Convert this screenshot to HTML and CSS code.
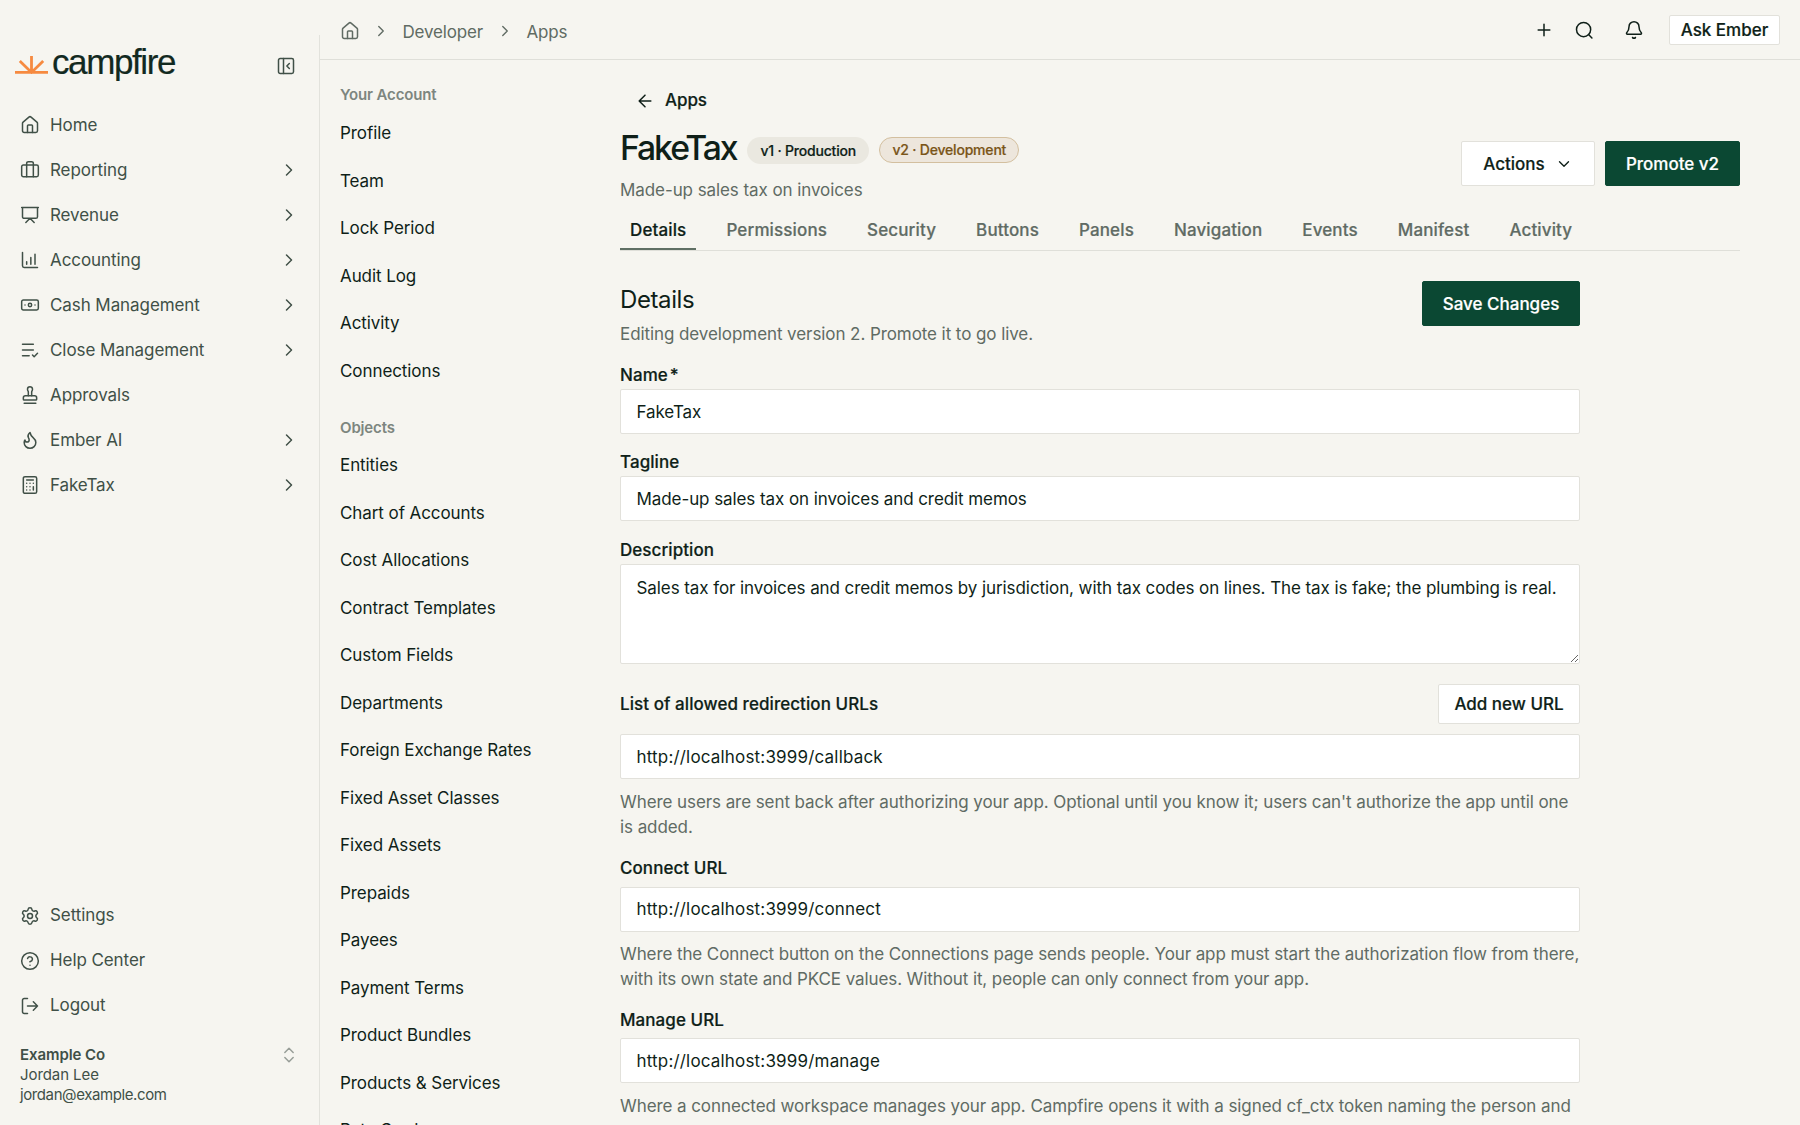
FILE: index.html
```html
<!DOCTYPE html>
<html lang="en">
<head>
    <meta charset="UTF-8">
    <meta name="viewport" content="width=device-width, initial-scale=1.0">
    <title>FakeTax - Campfire</title>
    <link rel="stylesheet" href="styles.css">
</head>
<body>
    <!-- shared icons -->
    <svg class="sprite" width="0" height="0">
        <symbol id="i-home" viewBox="0 0 24 24"><path d="M15 21v-8a1 1 0 0 0-1-1h-4a1 1 0 0 0-1 1v8"/><path d="M3 10a2 2 0 0 1 .709-1.528l7-6a2 2 0 0 1 2.582 0l7 6A2 2 0 0 1 21 10v9a2 2 0 0 1-2 2H5a2 2 0 0 1-2-2z"/></symbol>
        <symbol id="i-right" viewBox="0 0 24 24"><path d="m9 18 6-6-6-6"/></symbol>
    </svg>

    <div class="app">
        <aside class="sidebar">
            <div class="brand">
                <svg class="logo-mark" viewBox="0 0 33 18"><path d="M0 16.4h33M16.5 0v16M4.8 5l11.7 11.4L28.2 5"/></svg>
                <span class="logo-text">campfire</span>
                <svg class="icon" viewBox="0 0 24 24"><rect width="18" height="18" x="3" y="3" rx="2"/><path d="M9 3v18M16 15l-3-3 3-3"/></svg>
            </div>

            <nav class="menu">
                <a class="menu-item"><svg class="icon"><use href="#i-home"/></svg><span>Home</span></a>
                <a class="menu-item"><svg class="icon" viewBox="0 0 24 24"><path d="M16 20V4a2 2 0 0 0-2-2h-4a2 2 0 0 0-2 2v16"/><rect width="20" height="14" x="2" y="6" rx="2"/></svg><span>Reporting</span><svg class="icon"><use href="#i-right"/></svg></a>
                <a class="menu-item"><svg class="icon" viewBox="0 0 24 24"><path d="M2 3h20M21 3v11a2 2 0 0 1-2 2H5a2 2 0 0 1-2-2V3M7 21l5-5 5 5"/></svg><span>Revenue</span><svg class="icon"><use href="#i-right"/></svg></a>
                <a class="menu-item"><svg class="icon" viewBox="0 0 24 24"><path d="M13 17V9M18 17V5M3 3v16a2 2 0 0 0 2 2h16M8 17v-3"/></svg><span>Accounting</span><svg class="icon"><use href="#i-right"/></svg></a>
                <a class="menu-item"><svg class="icon" viewBox="0 0 24 24"><rect width="20" height="12" x="2" y="6" rx="2"/><circle cx="12" cy="12" r="2"/><path d="M6 12h.01M18 12h.01"/></svg><span>Cash Management</span><svg class="icon"><use href="#i-right"/></svg></a>
                <a class="menu-item"><svg class="icon" viewBox="0 0 24 24"><path d="M16 5H3M16 12H3M11 19H3M15 18l2 2 4-4"/></svg><span>Close Management</span><svg class="icon"><use href="#i-right"/></svg></a>
                <a class="menu-item"><svg class="icon" viewBox="0 0 24 24"><path d="M14 13V8.5C14 7 15 7 15 5a3 3 0 0 0-6 0c0 2 1 2 1 3.5V13"/><path d="M20 15.5a2.5 2.5 0 0 0-2.5-2.5h-11A2.5 2.5 0 0 0 4 15.5V17a1 1 0 0 0 1 1h14a1 1 0 0 0 1-1z"/><path d="M5 22h14"/></svg><span>Approvals</span></a>
                <a class="menu-item"><svg class="icon" viewBox="0 0 24 24"><path d="M8.5 14.5A2.5 2.5 0 0 0 11 12c0-1.38-.5-2-1-3-1.072-2.143-.224-4.054 2-6 .5 2.5 2 4.9 4 6.5 2 1.6 3 3.5 3 5.5a7 7 0 1 1-14 0c0-1.153.433-2.294 1-3a2.5 2.5 0 0 0 2.5 2.5z"/></svg><span>Ember AI</span><svg class="icon"><use href="#i-right"/></svg></a>
                <a class="menu-item"><svg class="icon" viewBox="0 0 24 24"><rect width="16" height="20" x="4" y="2" rx="2"/><path d="M8 6h8M16 14v4M16 10h.01M12 10h.01M8 10h.01M12 14h.01M8 14h.01M12 18h.01M8 18h.01"/></svg><span>FakeTax</span><svg class="icon"><use href="#i-right"/></svg></a>
            </nav>

            <nav class="menu menu-bottom">
                <a class="menu-item"><svg class="icon" viewBox="0 0 24 24"><path d="M9.671 4.136a2.34 2.34 0 0 1 4.659 0 2.34 2.34 0 0 0 3.319 1.915 2.34 2.34 0 0 1 2.33 4.033 2.34 2.34 0 0 0 0 3.831 2.34 2.34 0 0 1-2.33 4.033 2.34 2.34 0 0 0-3.319 1.915 2.34 2.34 0 0 1-4.659 0 2.34 2.34 0 0 0-3.32-1.915 2.34 2.34 0 0 1-2.33-4.033 2.34 2.34 0 0 0 0-3.831A2.34 2.34 0 0 1 6.35 6.051a2.34 2.34 0 0 0 3.319-1.915"/><circle cx="12" cy="12" r="3"/></svg><span>Settings</span></a>
                <a class="menu-item"><svg class="icon" viewBox="0 0 24 24"><circle cx="12" cy="12" r="10"/><path d="M9.09 9a3 3 0 0 1 5.83 1c0 2-3 3-3 3M12 17h.01"/></svg><span>Help Center</span></a>
                <a class="menu-item"><svg class="icon" viewBox="0 0 24 24"><path d="m16 17 5-5-5-5M21 12H9M9 21H5a2 2 0 0 1-2-2V5a2 2 0 0 1 2-2h4"/></svg><span>Logout</span></a>
            </nav>

            <div class="account">
                <div>
                    <strong>Example Co</strong>
                    <div>Jordan Lee</div>
                    <div class="email">jordan@example.com</div>
                </div>
                <svg class="icon" viewBox="0 0 24 24"><path d="m7 15 5 5 5-5M7 9l5-5 5 5"/></svg>
            </div>
        </aside>

        <div class="page">
            <header class="topbar">
                <div class="breadcrumbs">
                    <svg class="icon"><use href="#i-home"/></svg>
                    <svg class="icon small"><use href="#i-right"/></svg>
                    <span>Developer</span>
                    <svg class="icon small"><use href="#i-right"/></svg>
                    <span>Apps</span>
                </div>
                <div class="top-actions">
                    <svg class="icon" viewBox="0 0 24 24"><path d="M5 12h14M12 5v14"/></svg>
                    <svg class="icon search" viewBox="0 0 24 24"><circle cx="11.5" cy="11.5" r="8.5"/><path d="m21.5 21.5-4-4"/></svg>
                    <svg class="icon bell" viewBox="0 0 24 24"><path d="M10.268 21a2 2 0 0 0 3.464 0"/><path d="M3.262 15.326A1 1 0 0 0 4 17h16a1 1 0 0 0 .74-1.673C19.41 13.956 18 12.499 18 8A6 6 0 0 0 6 8c0 4.499-1.411 5.956-2.738 7.326"/></svg>
                    <button class="btn btn-ember">Ask Ember</button>
                </div>
            </header>

            <div class="columns">
                <nav class="subnav">
                    <h4>Your Account</h4>
                    <a>Profile</a>
                    <a>Team</a>
                    <a>Lock Period</a>
                    <a>Audit Log</a>
                    <a>Activity</a>
                    <a>Connections</a>
                    <h4 class="second">Objects</h4>
                    <a>Entities</a>
                    <a>Chart of Accounts</a>
                    <a>Cost Allocations</a>
                    <a>Contract Templates</a>
                    <a>Custom Fields</a>
                    <a>Departments</a>
                    <a>Foreign Exchange Rates</a>
                    <a>Fixed Asset Classes</a>
                    <a>Fixed Assets</a>
                    <a>Prepaids</a>
                    <a>Payees</a>
                    <a>Payment Terms</a>
                    <a>Product Bundles</a>
                    <a>Products &amp; Services</a>
                    <a>Rate Cards</a>
                </nav>

                <main class="content">
                    <a class="back"><svg class="icon" viewBox="0 0 24 24"><path d="m12 19-7-7 7-7M19 12H5"/></svg>Apps</a>

                    <div class="app-header">
                        <div>
                            <div class="title-row">
                                <h1>FakeTax</h1>
                                <span class="badge">v1 · Production</span>
                                <span class="badge badge-dev">v2 · Development</span>
                            </div>
                            <p class="subtitle">Made-up sales tax on invoices</p>
                        </div>
                        <div class="header-buttons">
                            <button class="btn">Actions <svg class="icon small" viewBox="0 0 24 24"><path d="m6 9 6 6 6-6"/></svg></button>
                            <button class="btn btn-primary">Promote v2</button>
                        </div>
                    </div>

                    <div class="tabs">
                        <a class="tab active">Details</a>
                        <a class="tab">Permissions</a>
                        <a class="tab">Security</a>
                        <a class="tab">Buttons</a>
                        <a class="tab">Panels</a>
                        <a class="tab">Navigation</a>
                        <a class="tab">Events</a>
                        <a class="tab">Manifest</a>
                        <a class="tab">Activity</a>
                    </div>

                    <form class="form">
                        <div class="form-head">
                            <div>
                                <h2>Details</h2>
                                <p>Editing development version 2. Promote it to go live.</p>
                            </div>
                            <button type="button" class="btn btn-primary btn-save">Save Changes</button>
                        </div>

                        <div class="field">
                            <label>Name<span class="star">*</span></label>
                            <input type="text" value="FakeTax">
                        </div>
                        <div class="field">
                            <label>Tagline</label>
                            <input type="text" value="Made-up sales tax on invoices and credit memos">
                        </div>
                        <div class="field">
                            <label>Description</label>
                            <textarea>Sales tax for invoices and credit memos by jurisdiction, with tax codes on lines. The tax is fake; the plumbing is real.</textarea>
                        </div>
                        <div class="url-head">
                            <label>List of allowed redirection URLs</label>
                            <button type="button" class="btn btn-add">Add new URL</button>
                        </div>
                        <input class="url" type="text" value="http://localhost:3999/callback">
                        <p class="help">Where users are sent back after authorizing your app. Optional until you know it; users can't authorize the app until one is added.</p>

                        <label class="url-label">Connect URL</label>
                        <input class="url" type="text" value="http://localhost:3999/connect">
                        <p class="help help-tight">Where the Connect button on the Connections page sends people. Your app must start the authorization flow from there, with its own state and PKCE values. Without it, people can only connect from your app.</p>

                        <label class="url-label">Manage URL</label>
                        <input class="url" type="text" value="http://localhost:3999/manage">
                        <p class="help">Where a connected workspace manages your app. Campfire opens it with a signed cf_ctx token naming the person and</p>
                    </form>
                </main>
            </div>
        </div>
    </div>
</body>
</html>
```
FILE: styles.css
```css
* {
    box-sizing: border-box;
}
body {
    margin: 0;
    background: #f6f5f0;
    color: #0f1f18;
    font-family: Inter, "Liberation Sans", sans-serif;
    font-size: 17px;
    line-height: 25px;
    letter-spacing: -0.08px;
}
h1, h2, h4, p {
    margin: 0;
}
.sprite {
    display: block;
    height: 0;
}
.app {
    display: flex;
    height: 1125px;
    overflow: hidden;
}
.icon {
    width: 20px;
    height: 20px;
    flex: none;
    fill: none;
    stroke: currentColor;
    stroke-width: 1.8;
    stroke-linecap: round;
    stroke-linejoin: round;
}
.icon.small {
    width: 18px;
    height: 18px;
}

/* sidebar */
.sidebar {
    width: 319px;
    flex: none;
    display: flex;
    flex-direction: column;
    color: #405047;
}
.brand {
    display: flex;
    align-items: center;
    height: 102px;
    padding: 30px 23px 0 15px;
}
.logo-mark {
    width: 33px;
    height: 18px;
    margin-top: -2px;
    fill: none;
    stroke: #f68a40;
    stroke-width: 2.8;
}
.logo-text {
    flex: 1;
    margin: -9px 0 0 4px;
    color: #12291f;
    font-family: "Liberation Sans", Arial, sans-serif;
    font-size: 35px;
    letter-spacing: -1.4px;
    -webkit-text-stroke: 0.2px #12291f;
}
.menu-item {
    display: flex;
    align-items: center;
    height: 45px;
    padding: 0 20px;
}
.menu-item span {
    flex: 1;
    margin-left: 10px;
    padding-top: 1px;
}
.menu-bottom {
    margin-top: auto;
}
.menu-bottom span {
    padding-top: 0;
}
.account {
    display: flex;
    justify-content: space-between;
    align-items: flex-start;
    padding: 17px 20px 20px;
    font-size: 15px;
    line-height: 20px;
}
.account strong {
    font-weight: 600;
}
.account .email {
    letter-spacing: -0.4px;
}
.account .icon {
    color: #989e98;
}

/* top bar */
.page {
    flex: 1;
    min-width: 0;
}
.topbar {
    display: flex;
    justify-content: space-between;
    height: 60px;
    padding: 0 20px 0 21px;
    border-bottom: 1px solid #dfdfd9;
}
.breadcrumbs {
    display: flex;
    align-items: center;
    gap: 12.7px;
    padding-top: 3px;
    color: #606b63;
    letter-spacing: -0.15px;
}
.breadcrumbs span {
    padding-top: 2px;
}
.breadcrumbs .icon:first-child {
    margin-right: -1px;
}
.top-actions {
    display: flex;
    align-items: center;
    padding-top: 1px;
}
.top-actions .search {
    margin-left: 20px;
}
.top-actions .bell {
    margin: 0 25px 0 30px;
}

/* settings navigation */
.columns {
    display: flex;
    height: 1065px;
}
.subnav {
    width: 300px;
    flex: none;
    margin-top: -25px;
    padding: 46px 0 0 20px;
    border-left: 1px solid #e2e2dc;
    overflow: hidden;
}
.subnav h4 {
    height: 28px;
    color: #7d867f;
    font-size: 15px;
    font-weight: 600;
    line-height: 28px;
    letter-spacing: -0.15px;
}
.subnav .second {
    height: 47px;
    padding-top: 20px;
}
.subnav a {
    display: block;
    height: 47.5px;
    line-height: 49px;
}

/* content */
.content {
    width: 1120px;
    margin-left: 1px;
}
.back, .badge, .btn, .tab, label {
    font-weight: 500;
    -webkit-text-stroke: 0.2px currentColor;
}
.back {
    display: flex;
    align-items: center;
    gap: 10px;
    height: 25px;
    margin: 28px 0 0 15px;
}
.app-header {
    display: flex;
    justify-content: space-between;
}
.title-row {
    display: flex;
    align-items: center;
    height: 46px;
    margin-top: 14px;
}
h1 {
    font-size: 33.75px;
    font-weight: 500;
    letter-spacing: -2.1px;
    line-height: 46px;
    margin: -4px 11px 0 0;
}
.badge {
    height: 27px;
    margin-right: 10.5px;
    padding: 0 13px;
    border-radius: 14px;
    background: #eae8e0;
    font-size: 14px;
    line-height: 27px;
    letter-spacing: -0.2px;
}
.badge-dev {
    height: 26px;
    padding: 0 12px;
    border: 1.5px solid #d3bf9f;
    background: #ede6dc;
    color: #7a5518;
    line-height: 24px;
}
.subtitle {
    margin-top: 5px;
    color: #606b64;
}
.btn {
    display: inline-flex;
    align-items: center;
    justify-content: center;
    gap: 10px;
    padding: 1px 0 0;
    border: 1px solid #e2e1db;
    border-radius: 2px;
    background: #fff;
    color: #0f1f18;
    font-family: inherit;
    font-size: inherit;
    line-height: inherit;
    letter-spacing: 0;
}
.btn-ember {
    width: 111px;
    height: 30px;
}
.header-buttons {
    display: flex;
    gap: 10px;
    margin-top: 28px;
    height: 45px;
}
.header-buttons .btn {
    width: 134px;
}
.btn-primary, .header-buttons .btn-primary {
    width: 135px;
    height: 45px;
    border-color: #0b4833;
    background: #0b4833;
    color: #fff;
}
.form .btn-save {
    width: 158px;
}
.tabs {
    display: flex;
    gap: 20px;
    height: 40px;
    margin-top: 8px;
    border-bottom: 1px solid #dfdfd9;
    letter-spacing: 0.13px;
}
.tab {
    padding: 7px 10px 0;
    border-bottom: 2px solid transparent;
    color: #606b64;
}
.tab.active {
    border-color: #5f6f64;
    color: #0f1f18;
}

/* form */
.form {
    width: 960px;
    padding-top: 30px;
}
.form-head {
    display: flex;
    justify-content: space-between;
    height: 82px;
}
.form-head p {
    color: #606b64;
    margin-top: 4px;
}
h2 {
    font-size: 24px;
    font-weight: 400;
    letter-spacing: -0.4px;
    line-height: 36px;
    padding-top: 1px;
}
label {
    display: block;
    letter-spacing: 0.06px;
}
.star {
    margin-left: 2px;
}
.field {
    margin-bottom: 17px;
}
.field:nth-child(2) {
    margin-bottom: 16px;
}
input, textarea {
    display: block;
    width: 100%;
    height: 45px;
    margin: 0;
    padding: 0 15.5px;
    border: 1px solid #e2e1db;
    border-radius: 2px;
    background: #fff;
    color: #0f1f18;
    font: inherit;
    letter-spacing: inherit;
}
.field label {
    height: 26px;
}
input.url {
    letter-spacing: 0.18px;
}
textarea {
    height: 100px;
    padding-top: 11px;
}
.url-head {
    display: flex;
    justify-content: space-between;
    align-items: center;
    height: 40px;
    margin: 20px 0 10px;
}
.btn-add {
    width: 142px;
    height: 40px;
}
.help {
    margin-top: 11px;
    color: #606b64;
}
.help-tight {
    margin-top: 10px;
    margin-right: -8px;
    letter-spacing: -0.1px;
}
.url-label {
    margin: 16px 0 5.5px;
}
```
